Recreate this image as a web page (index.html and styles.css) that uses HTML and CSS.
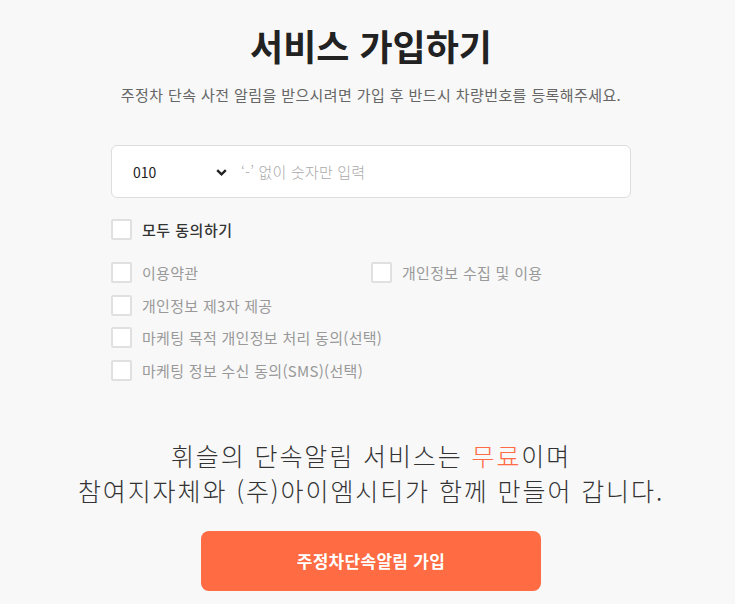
FILE: index.html
```html
<!DOCTYPE html>
<html lang="ko">
<head>
<meta charset="utf-8">
<link rel="stylesheet" href="styles.css">
</head>
<body>
<main class="page">
  <h1 class="title">서비스 가입하기</h1>
  <p class="subtitle">주정차 단속 사전 알림을 받으시려면 가입 후 반드시 차량번호를 등록해주세요.</p>
  <div class="phone">
    <div class="select">
      <span>010</span>
      <svg class="chev" width="11" height="7" viewBox="0 0 11 7"><path d="M1.2 1.2 L5.5 5.3 L9.8 1.2" fill="none" stroke="#222" stroke-width="2.4"/></svg>
    </div>
    <span class="placeholder">‘-’ 없이 숫자만 입력</span>
  </div>
  <label class="check all"><span class="box"></span>모두 동의하기</label>
  <div class="terms">
    <label class="check"><span class="box"></span>이용약관</label>
    <label class="check"><span class="box"></span>개인정보 수집 및 이용</label>
    <label class="check full"><span class="box"></span>개인정보 제3자 제공</label>
    <label class="check full"><span class="box"></span>마케팅 목적 개인정보 처리 동의(선택)</label>
    <label class="check full"><span class="box"></span>마케팅 정보 수신 동의(SMS)(선택)</label>
  </div>
  <p class="notice">휘슬의 단속알림 서비스는 <em>무료</em>이며<br>참여지자체와 (주)아이엠시티가 함께 만들어 갑니다.</p>
  <button class="submit">주정차단속알림 가입</button>
</main>
</body>
</html>
```
FILE: styles.css
```css
* { box-sizing: border-box; }
html, body { margin: 0; padding: 0; background: #f8f8f8; }
body { font-family: "Noto Sans CJK KR", "Noto Sans", sans-serif; color: #222; }
.page { width: 735px; display: flex; flex-direction: column; align-items: center; padding: 19px 0 0 7px; }
.title { margin: 0; font-size: 36px; font-weight: 700; line-height: 52px; color: #222; }
.subtitle { margin: 14px 0 0; font-size: 15px; line-height: 20px; color: #666; letter-spacing: 0.4px; font-weight: 400; }
.phone { margin-top: 40px; width: 520px; height: 53px; background: #fff; border: 1px solid #ddd; border-radius: 6px; display: flex; align-items: center; padding-left: 21px; }
.select { width: 94px; display: flex; align-items: center; justify-content: space-between; font-size: 14px; color: #222; }
.chev { margin-top: 1px; }
.placeholder { margin-left: 14px; font-size: 15px; color: #aaa; letter-spacing: 0.2px; font-weight: 300; }
.check { display: flex; align-items: center; gap: 10px; font-size: 15px; color: #999; height: 21px; letter-spacing: 0.3px; font-weight: 400; }
.box { width: 21px; height: 21px; background: #fff; border: 2px solid #e0e0e0; border-radius: 2px; flex: none; }
.all { width: 520px; margin-top: 21px; color: #333; font-weight: 500; letter-spacing: 0.5px; }
.terms { width: 520px; margin-top: 22px; display: grid; grid-template-columns: 260px 260px; grid-auto-rows: 21px; row-gap: 11.5px; }
.terms .full { grid-column: 1 / 3; }
.notice { margin: 57px 0 0; text-align: center; font-size: 25px; line-height: 35px; color: #333; font-weight: 300; letter-spacing: 1.9px; }
.notice em { font-style: normal; color: #ff6b45; }
.submit { margin-top: 23px; width: 340px; height: 60px; border: 0; border-radius: 8px; background: #ff6b42; color: #fff; font-family: inherit; font-size: 17px; font-weight: 700; letter-spacing: 0.3px; }
```
